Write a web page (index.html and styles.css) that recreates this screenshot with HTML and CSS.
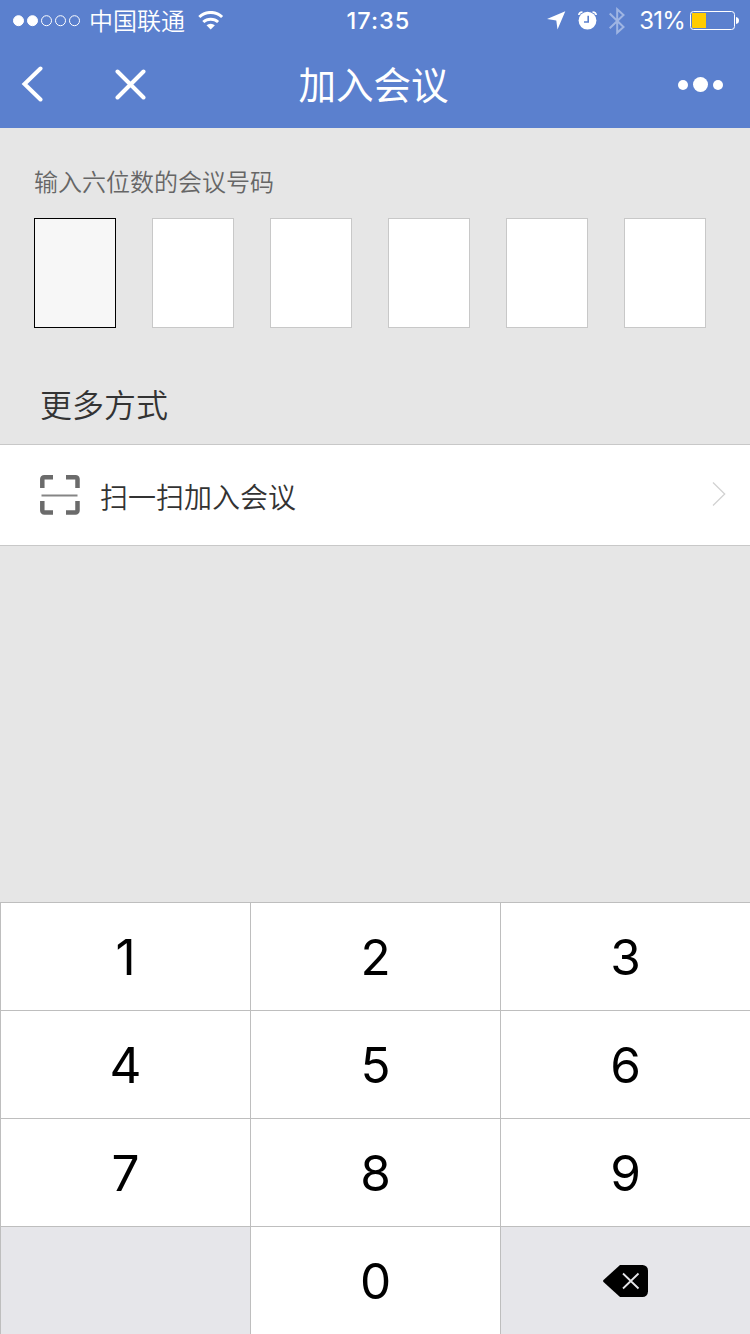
FILE: index.html
```html
<!DOCTYPE html>
<html lang="zh-CN">
<head>
  <meta charset="UTF-8">
  <meta name="viewport" content="width=device-width, initial-scale=1.0">
  <title>加入会议</title>
  <link rel="stylesheet" href="styles.css">
</head>
<body>
  <header class="header">
    <div class="status">
      <div class="status-left">
        <svg width="68" height="12" viewBox="0 0 68 12" fill="#fff" stroke="#fff">
          <circle cx="5.5" cy="5.7" r="5" /><circle cx="19.5" cy="5.7" r="5" />
          <g fill="none"><circle cx="33.5" cy="5.7" r="5" /><circle cx="47.5" cy="5.7" r="5" /><circle cx="61.5" cy="5.7" r="5" /></g>
        </svg>
        <span class="carrier">中国联通</span>
        <svg class="wifi" width="26" height="20" viewBox="0 0 26 20" fill="none" stroke="#fff" stroke-width="3">
          <path d="M1.3 6a16.500 16.500 0 0 1 22.800 0M5.300 11a11 11 0 0 1 14.800 0" />
          <path d="M8.500 14.300a6.300 6.300 0 0 1 8.400 0L12.700 18.500z" fill="#fff" stroke="none" />
        </svg>
      </div>
      <div class="clock">17:35</div>
      <div class="status-right">
        <svg width="19" height="19" viewBox="0 0 19 19" fill="#fff"><path d="M18.300.3L10.500 18.500 9.300 9.500 0 8z" /></svg>
        <svg class="alarm" width="20" height="20" viewBox="0 0 20 20" fill="none" stroke="#fff">
          <circle cx="9.500" cy="9.600" r="8.900" fill="#fff" stroke="none" />
          <path d="M.8 4Q1 1.200 4.500 1M18.200 4Q18 1.200 14.500 1" stroke-width="1.600" />
          <path d="M10.200 4.800v6.200H6" stroke="#5b80ce" stroke-width="1.600" />
        </svg>
        <svg class="bluetooth" width="16" height="28" viewBox="0 0 16 28" fill="none" stroke="#9fb5e3" stroke-width="2"><path d="M.7 6.500L14.500 20 8.200 25.700V2.300L14.500 8 .7 21.300" /></svg>
        <span class="percent">31%</span>
        <svg width="49" height="20" viewBox="0 0 49 20">
          <rect x=".5" y=".5" width="44" height="18" rx="3" fill="none" stroke="#fff" />
          <path d="M2 2h14v15H3a1 1 0 0 1-1-1z" fill="#fc0" />
          <path d="M46 6q3 .5 3 3.500t-3 3.500z" fill="#fff" />
        </svg>
      </div>
    </div>
    <nav class="nav">
      <div class="nav-left">
        <svg width="22" height="36" viewBox="0 0 22 36" fill="none" stroke="#fff" stroke-width="4" stroke-linecap="round"><path d="M19.500 2.500L3.500 18 19.500 33.500" /></svg>
        <svg class="close" width="32" height="32" viewBox="0 0 32 32" fill="none" stroke="#fff" stroke-width="4" stroke-linecap="round"><path d="M3.500 3.500l26 26M29.500 3.500L3.500 29.500" /></svg>
      </div>
      <h1>加入会议</h1>
      <svg width="46" height="16" viewBox="0 0 46 16" fill="#fff"><circle cx="5" cy="9" r="5" /><circle cx="22.500" cy="8.500" r="7.500" /><circle cx="40" cy="9" r="5" /></svg>
    </nav>
  </header>

  <main class="content">
    <p class="label">输入六位数的会议号码</p>
    <div class="code">
      <div class="box active"></div>
      <div class="box"></div>
      <div class="box"></div>
      <div class="box"></div>
      <div class="box"></div>
      <div class="box"></div>
    </div>
    <h2>更多方式</h2>
    <div class="row">
      <svg width="40" height="40" viewBox="0 0 40 40" fill="none" stroke="#6b6b6b" stroke-width="4.500">
        <path d="M2.300 13V4a2 2 0 0 1 2-1.700H13M26 2.300h9.500a2 2 0 0 1 2 1.700v9M37.500 26v9.500a2 2 0 0 1-2 2H26M13 37.500H4.300a2 2 0 0 1-2-2V26" />
        <path d="M1.500 20.500h36" stroke="#858585" stroke-width="2.200" />
      </svg>
      <span>扫一扫加入会议</span>
      <svg class="arrow" width="14" height="26" viewBox="0 0 14 26" fill="none" stroke="#d2d2d2" stroke-width="1.300"><path d="M1 1.500L12.700 13 1 24.500" /></svg>
    </div>
  </main>

  <div class="keypad">
    <div class="key">1</div>
    <div class="key">2</div>
    <div class="key">3</div>
    <div class="key">4</div>
    <div class="key">5</div>
    <div class="key">6</div>
    <div class="key">7</div>
    <div class="key">8</div>
    <div class="key">9</div>
    <div class="key gray"></div>
    <div class="key">0</div>
    <div class="key gray">
      <svg width="46" height="32" viewBox="0 0 46 32"><path d="M17 0h22.500a5.500 5.500 0 0 1 5.500 5.500v21a5.500 5.500 0 0 1-5.500 5.500H17L.5 17Q-.3 16 .5 15z" /><path d="M20 8.500l15.500 15M35.500 8.500l-15.500 15" stroke="#e6e6ea" stroke-width="1.800" /></svg>
    </div>
  </div>
</body>
</html>
```
FILE: styles.css
```css
* {
  box-sizing: border-box;
}
body {
  margin: 0;
  height: 1334px;
  display: flex;
  flex-direction: column;
  background: #e6e6e6;
  font-family: Inter, "Noto Sans CJK SC", sans-serif;
  font-weight: 350;
  color: #333;
}
svg {
  display: block;
  flex-shrink: 0;
}
.header {
  height: 128px;
  background: #5b80ce;
  color: #fff;
}
.status {
  display: grid;
  grid-template-columns: 1fr auto 1fr;
  align-items: center;
  height: 41px;
  padding: 0 11px 0 13px;
  font-size: 24px;
}
.status-left,
.status-right {
  display: flex;
  align-items: center;
}
.status-right {
  justify-content: flex-end;
}
.carrier {
  margin-left: 8px;
  padding-top: 2px;
  line-height: 38px;
}
.wifi {
  margin-left: 13px;
}
.clock {
  font-size: 23.5px;
  font-weight: 500;
  letter-spacing: 1px;
  padding-left: 5px;
}
.alarm {
  margin-left: 12px;
}
.bluetooth {
  margin-left: 11px;
}
.percent {
  margin: 0 5px 0 14px;
  font-weight: 400;
  font-size: 24px;
  letter-spacing: -0.8px;
}
.nav {
  display: grid;
  grid-template-columns: 1fr auto 1fr;
  align-items: center;
  height: 87px;
  padding: 0 26px 2px 21px;
}
.nav-left {
  display: flex;
  align-items: center;
}
.close {
  margin-left: 71px;
}
.nav h1 {
  margin: 0;
  padding: 5px 0 0 2px;
  font-size: 37.5px;
  font-weight: 400;
  line-height: 56px;
}
.nav > svg {
  justify-self: end;
}
.content {
  flex: 1;
}
.label {
  margin: 0;
  padding: 37px 34px 0;
  font-size: 24px;
  line-height: 36px;
  color: #666;
}
.code {
  display: flex;
  gap: 36px;
  padding: 17px 34px 0;
}
.box {
  width: 82px;
  height: 110px;
  background: #fff;
  border: 1px solid #c8c8c8;
}
.box.active {
  background: #f7f7f7;
  border-color: #000;
}
h2 {
  margin: 0;
  padding: 54px 40px 14px;
  font-size: 32px;
  font-weight: 350;
  line-height: 48px;
}
.row {
  display: flex;
  align-items: center;
  height: 102px;
  padding: 0 24px 0 40px;
  background: #fff;
  border: 1px solid #c8c8c8;
  border-width: 1px 0;
  font-size: 28px;
}
.row span {
  margin-left: 20px;
  padding-top: 1px;
}
.arrow {
  margin: 0 0 2px auto;
}
.keypad {
  display: grid;
  grid-template-columns: repeat(3, 250px);
  grid-auto-rows: 108px;
}
.key {
  display: flex;
  align-items: center;
  justify-content: center;
  background: #fff;
  border-top: 1px solid #bebebe;
  border-left: 1px solid #bebebe;
  color: #000;
  font-size: 49.5px;
  font-weight: 400;
}
.key.gray {
  background: #e6e6ea;
}
```
